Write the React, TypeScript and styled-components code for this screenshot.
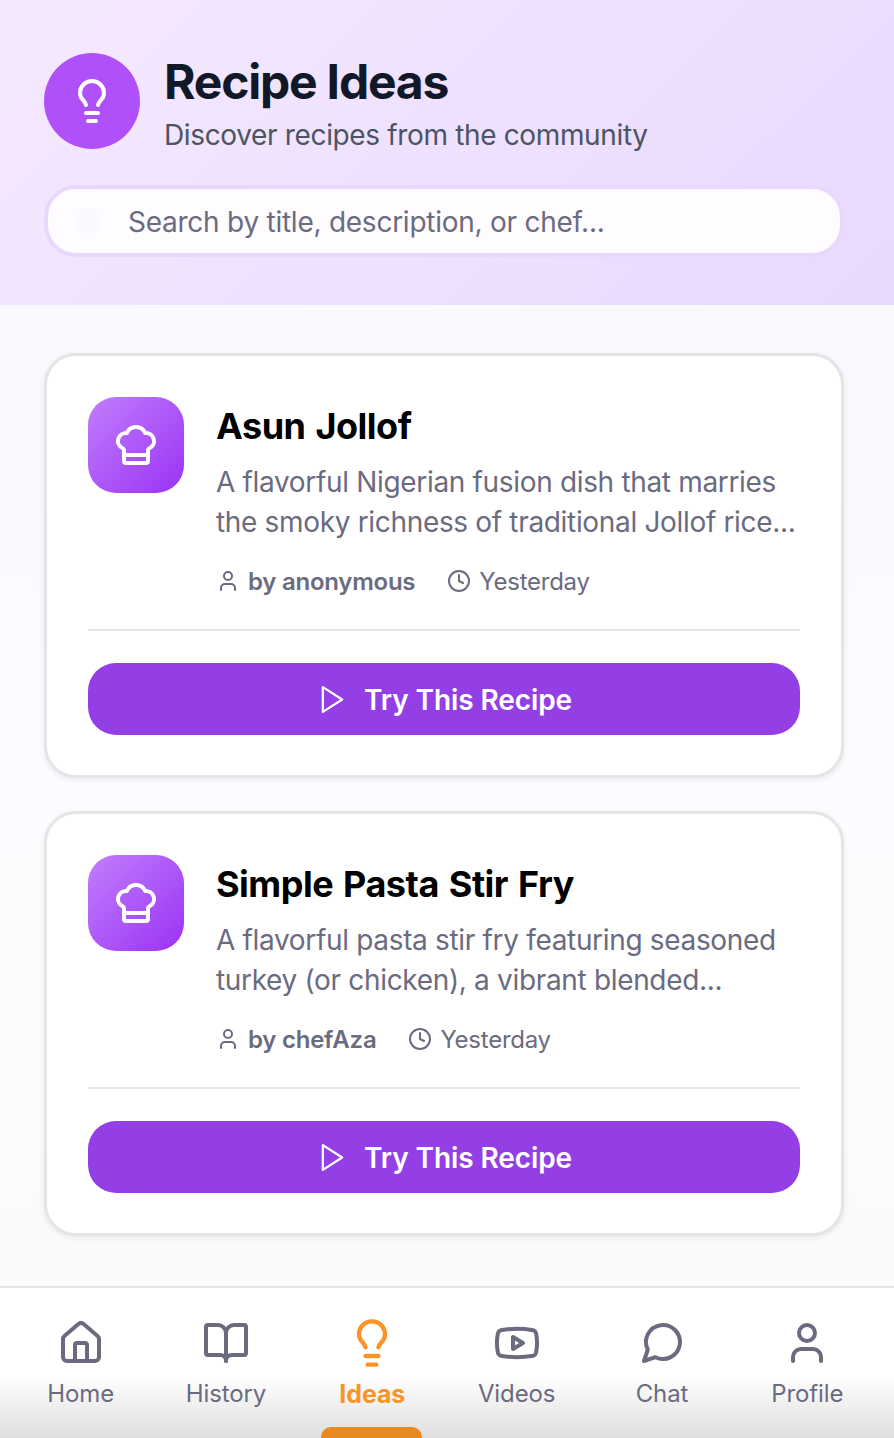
import styled, { createGlobalStyle } from 'styled-components';
import { BookOpen, ChefHat, Clock, House, Lightbulb, User, Youtube } from 'lucide-react';

const recipes = [
    {
        title: 'Asun Jollof',
        lines: ['A flavorful Nigerian fusion dish that marries', 'the smoky richness of traditional Jollof rice...'],
        chef: 'by anonymous',
    },
    {
        title: 'Simple Pasta Stir Fry',
        lines: ['A flavorful pasta stir fry featuring seasoned', 'turkey (or chicken), a vibrant blended...'],
        chef: 'by chefAza',
    },
];

// lucide's newer chat bubble and play shapes are rounder than the picture
const ChatIcon = () => (
    <svg width="48" height="48" viewBox="0 0 24 24" fill="none" stroke="currentColor" strokeWidth="2" strokeLinecap="round" strokeLinejoin="round">
        <path d="m3 21 1.9-5.7a8.5 8.5 0 1 1 3.8 3.8z" />
    </svg>
);

const PlayIcon = () => (
    <svg width="33" height="33" viewBox="0 0 24 24" fill="none" stroke="currentColor" strokeWidth="1.7" strokeLinejoin="round">
        <polygon points="5 3 19 12 5 21 5 3" />
    </svg>
);

const tabs = [
    { label: 'Home', icon: House },
    { label: 'History', icon: BookOpen },
    { label: 'Ideas', icon: Lightbulb, active: true },
    { label: 'Videos', icon: Youtube },
    { label: 'Chat', icon: ChatIcon },
    { label: 'Profile', icon: User },
];

const GlobalStyle = createGlobalStyle`
    html, body {
        margin: 0;
        padding: 0;
    }
    body {
        font-family: Inter, "Liberation Sans", sans-serif;
    }
`;

const Page = styled.div`
    width: 894px;
    height: 1438px;
    display: flex;
    flex-direction: column;
    overflow: hidden;
    background: linear-gradient(180deg, #f9f6ff 0%, #fdfcff 60%, #fafafa 100%);
`;

const Header = styled.header`
    height: 305px;
    box-sizing: border-box;
    padding: 53px 44px 0;
    flex-shrink: 0;
    background: linear-gradient(135deg, #f5e9ff 0%, #e9d9fe 100%);
`;

const HeaderTop = styled.div`
    display: flex;
    align-items: flex-start;
    gap: 24px;
    margin-bottom: 32px;
`;

const HeaderBadge = styled.div`
    width: 96px;
    height: 96px;
    border-radius: 50%;
    background-color: #af50fb;
    color: #fff;
    display: flex;
    align-items: center;
    justify-content: center;
`;

const Title = styled.h1`
    margin: 1px 0 7px;
    font-size: 48px;
    line-height: 56px;
    font-weight: 700;
    letter-spacing: -1.2px;
    color: #111827;
`;

const Subtitle = styled.p`
    margin: 0;
    font-size: 28px;
    line-height: 36px;
    letter-spacing: -0.35px;
    color: #4b5563;
`;

const SearchBox = styled.div`
    width: 800px;
    height: 72px;
    box-sizing: border-box;
    border: 4px solid #e9d8fe;
    border-radius: 32px;
    background-color: #fefcff;
    display: flex;
    align-items: center;
    padding-left: 29px;
`;

const SearchDot = styled.div`
    width: 22px;
    height: 24px;
    border-radius: 8px;
    background-color: #fbf9ff;
    margin-right: 29px;
`;

const SearchText = styled.span`
    padding-top: 2px;
    font-size: 28px;
    letter-spacing: -0.25px;
    color: #6b6b80;
`;

const Content = styled.main`
    flex: 1;
    padding: 48px 50px 0 44px;
    display: flex;
    flex-direction: column;
    gap: 33px;
`;

const Card = styled.article`
    width: 800px;
    height: 425px;
    box-sizing: border-box;
    padding: 41px 41px 0;
    border: 3px solid #e5e5e5;
    border-radius: 32px;
    background-color: #fff;
    box-shadow: 0 2px 6px rgba(0, 0, 0, 0.08);
`;

const CardTop = styled.div`
    display: flex;
    gap: 32px;
    height: 232px;
    border-bottom: 2px solid #e5e5e5;
`;

const RecipeIcon = styled.div`
    width: 96px;
    height: 96px;
    flex-shrink: 0;
    border-radius: 28px;
    background: linear-gradient(135deg, #c17efc 0%, #9a33f5 100%);
    color: #fff;
    display: flex;
    align-items: center;
    justify-content: center;
`;

const CardBody = styled.div`
    display: flex;
    flex-direction: column;
`;

const RecipeTitle = styled.h2`
    margin: 5px 0 12px;
    font-size: 36px;
    line-height: 48px;
    font-weight: 700;
    letter-spacing: -0.5px;
    word-spacing: 2px;
    color: #000;
`;

const Description = styled.p`
    margin: 0 0 19px;
    font-size: 28px;
    line-height: 40px;
    letter-spacing: -0.33px;
    color: #6b6b80;
    white-space: nowrap;
`;

const Meta = styled.div`
    display: flex;
    align-items: center;
    gap: 32px;
    height: 40px;
`;

const MetaItem = styled.span<{ $strong?: boolean }>`
    display: flex;
    align-items: center;
    gap: 8px;
    font-size: 24px;
    letter-spacing: -0.25px;
    font-weight: ${({ $strong }) => ($strong ? 600 : 400)};
    color: #6b6b80;
`;

const TryButton = styled.button`
    width: 712px;
    height: 72px;
    margin-top: 32px;
    border: 0;
    border-radius: 28px;
    padding: 0;
    background-color: #933fe5;
    color: #fff;
    font-family: inherit;
    font-size: 28px;
    font-weight: 600;
    letter-spacing: -0.1px;
    display: flex;
    align-items: center;
    justify-content: center;
    gap: 15px;
`;

const TryLabel = styled.span`
    padding-top: 2px;
`;

const BottomNav = styled.nav`
    height: 152px;
    flex-shrink: 0;
    box-sizing: border-box;
    padding: 0 14px 0 8px;
    border-top: 2px solid #e5e5e5;
    background: linear-gradient(180deg, #fff 0%, #fff 58%, #dfdfdf 100%);
    display: grid;
    grid-template-columns: repeat(6, 1fr);
`;

const Tab = styled.div<{ $active?: boolean }>`
    position: relative;
    display: flex;
    flex-direction: column;
    align-items: center;
    padding: ${({ $active }) => ($active ? '29px 0 0 2px' : '31px 0 0')};
    gap: ${({ $active }) => ($active ? '10px' : '12px')};
    font-size: ${({ $active }) => ($active ? '25px' : '24px')};
    line-height: 30px;
    letter-spacing: -0.1px;
    font-weight: ${({ $active }) => ($active ? 700 : 400)};
    color: ${({ $active }) => ($active ? '#fa9426' : '#6b6b80')};
`;

const TabIndicator = styled.span`
    position: absolute;
    bottom: 0;
    left: 50%;
    width: 101px;
    height: 11px;
    margin-left: -50px;
    border-radius: 10px 10px 0 0;
    background-color: #e88a22;
`;

export default function App() {
    return (
        <Page>
            <GlobalStyle />
            <Header>
                <HeaderTop>
                    <HeaderBadge>
                        <Lightbulb size={48} strokeWidth={2} />
                    </HeaderBadge>
                    <div>
                        <Title>Recipe Ideas</Title>
                        <Subtitle>Discover recipes from the community</Subtitle>
                    </div>
                </HeaderTop>
                <SearchBox>
                    <SearchDot />
                    <SearchText>Search by title, description, or chef...</SearchText>
                </SearchBox>
            </Header>
            <Content>
                {recipes.map((recipe) => (
                    <Card key={recipe.title}>
                        <CardTop>
                            <RecipeIcon>
                                <ChefHat size={48} strokeWidth={2} />
                            </RecipeIcon>
                            <CardBody>
                                <RecipeTitle>{recipe.title}</RecipeTitle>
                                <Description>
                                    {recipe.lines[0]}
                                    <br />
                                    {recipe.lines[1]}
                                </Description>
                                <Meta>
                                    <MetaItem $strong>
                                        <User size={24} strokeWidth={2} />
                                        {recipe.chef}
                                    </MetaItem>
                                    <MetaItem>
                                        <Clock size={24} strokeWidth={2} />
                                        Yesterday
                                    </MetaItem>
                                </Meta>
                            </CardBody>
                        </CardTop>
                        <TryButton>
                            <PlayIcon />
                            <TryLabel>Try This Recipe</TryLabel>
                        </TryButton>
                    </Card>
                ))}
            </Content>
            <BottomNav>
                {tabs.map(({ label, icon: Icon, active }) => (
                    <Tab key={label} $active={active}>
                        <Icon size={active ? 52 : 48} strokeWidth={2} />
                        {label}
                        {active && <TabIndicator />}
                    </Tab>
                ))}
            </BottomNav>
        </Page>
    );
}
